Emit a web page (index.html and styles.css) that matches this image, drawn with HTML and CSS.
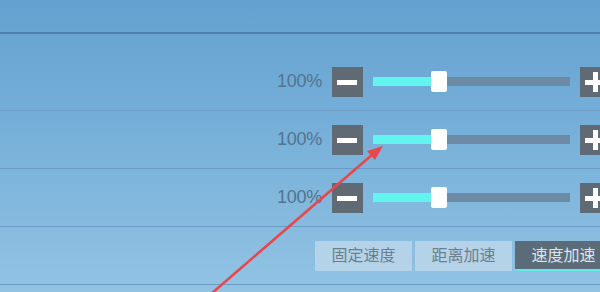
FILE: index.html
```html
<!DOCTYPE html>
<html lang="zh-CN">
<head>
    <meta charset="UTF-8">
    <meta name="viewport" content="width=device-width, initial-scale=1.0">
    <title>速度设置</title>
    <link rel="stylesheet" href="styles.css">
</head>
<body>
    <div class="panel">
        <div class="header"></div>
        <div class="spacer"></div>

        <!-- 滑块行 -->
        <div class="row">
            <span class="value">100%</span>
            <button class="step minus"><span class="bar"></span></button>
            <div class="track">
                <div class="fill"></div>
                <div class="thumb"></div>
            </div>
            <button class="step plus"><span class="bar"></span><span class="bar vert"></span></button>
        </div>

        <div class="row">
            <span class="value">100%</span>
            <button class="step minus"><span class="bar"></span></button>
            <div class="track">
                <div class="fill"></div>
                <div class="thumb"></div>
            </div>
            <button class="step plus"><span class="bar"></span><span class="bar vert"></span></button>
        </div>

        <div class="row">
            <span class="value">100%</span>
            <button class="step minus"><span class="bar"></span></button>
            <div class="track">
                <div class="fill"></div>
                <div class="thumb"></div>
            </div>
            <button class="step plus"><span class="bar"></span><span class="bar vert"></span></button>
        </div>

        <!-- 模式选择 -->
        <div class="row tabs">
            <div class="tab">固定速度</div>
            <div class="tab">距离加速</div>
            <div class="tab active">速度加速</div>
        </div>

        <!-- 红色箭头标注 -->
        <svg class="arrow" width="600" height="292" viewBox="0 0 600 292">
            <line x1="211" y1="294" x2="373" y2="154" stroke="#e9484b" stroke-width="2.6" stroke-linecap="round"/>
            <polygon points="383,146 375,160 367,151" fill="#e9484b"/>
        </svg>
    </div>
</body>
</html>
```

FILE: styles.css
```css
/* Página base */
body {
    margin: 0;
    width: 600px;
    height: 292px;
    overflow: hidden;
    font-family: "Liberation Sans", "Noto Sans CJK SC", sans-serif;
}
/* Fondo degradado del panel */
.panel {
    position: relative;
    width: 600px;
    height: 292px;
    background: linear-gradient(to bottom, #65a1d0 0%, #74aed8 40%, #92c3e3 100%);
    overflow: hidden;
}
.header {
    height: 32px;
    border-bottom: 2px solid #4c7fab;
}
.spacer {
    height: 19px;
}
/* Filas */
.row {
    display: flex;
    align-items: center;
    height: 57px;
    padding-left: 277px;
    border-bottom: 1px solid #6b9bc4;
}
.value {
    width: 45px;
    font-size: 18px;
    color: #53748f;
    letter-spacing: -0.3px;
}
/* Botones + y - */
.step {
    position: relative;
    flex: none;
    width: 31px;
    height: 30px;
    margin-left: 10px;
    padding: 0;
    border: none;
    background-color: #5f6a74;
}
.step .bar {
    position: absolute;
    left: 5px;
    top: 13px;
    width: 20px;
    height: 5px;
    background-color: #fff;
}
.step .bar.vert {
    left: 13px;
    top: 5px;
    width: 5px;
    height: 20px;
}
/* Barra deslizante */
.track {
    position: relative;
    flex: none;
    width: 197px;
    height: 9px;
    margin-left: 10px;
    background-color: #6e8ba5;
}
.fill {
    width: 59px;
    height: 100%;
    background-color: #62f4ee;
}
.thumb {
    position: absolute;
    left: 58px;
    top: -6px;
    width: 16px;
    height: 21px;
    background-color: #fff;
    border-radius: 2px;
}
.step.plus {
    margin-left: 10px;
}
/* Pestañas */
.tabs {
    padding-left: 315px;
    gap: 3px;
}
.tab {
    flex: none;
    width: 97px;
    height: 30px;
    line-height: 30px;
    text-align: center;
    font-size: 16px;
    color: #6b7e8e;
    background-color: #b5d3e8;
    box-sizing: border-box;
}
.tab.active {
    background-color: #5c6b78;
    color: #dbe6ee;
    border-bottom: 2px solid #5fe9e2;
    line-height: 29px;
}
/* Flecha roja encima */
.arrow {
    position: absolute;
    left: 0;
    top: 0;
}
```
